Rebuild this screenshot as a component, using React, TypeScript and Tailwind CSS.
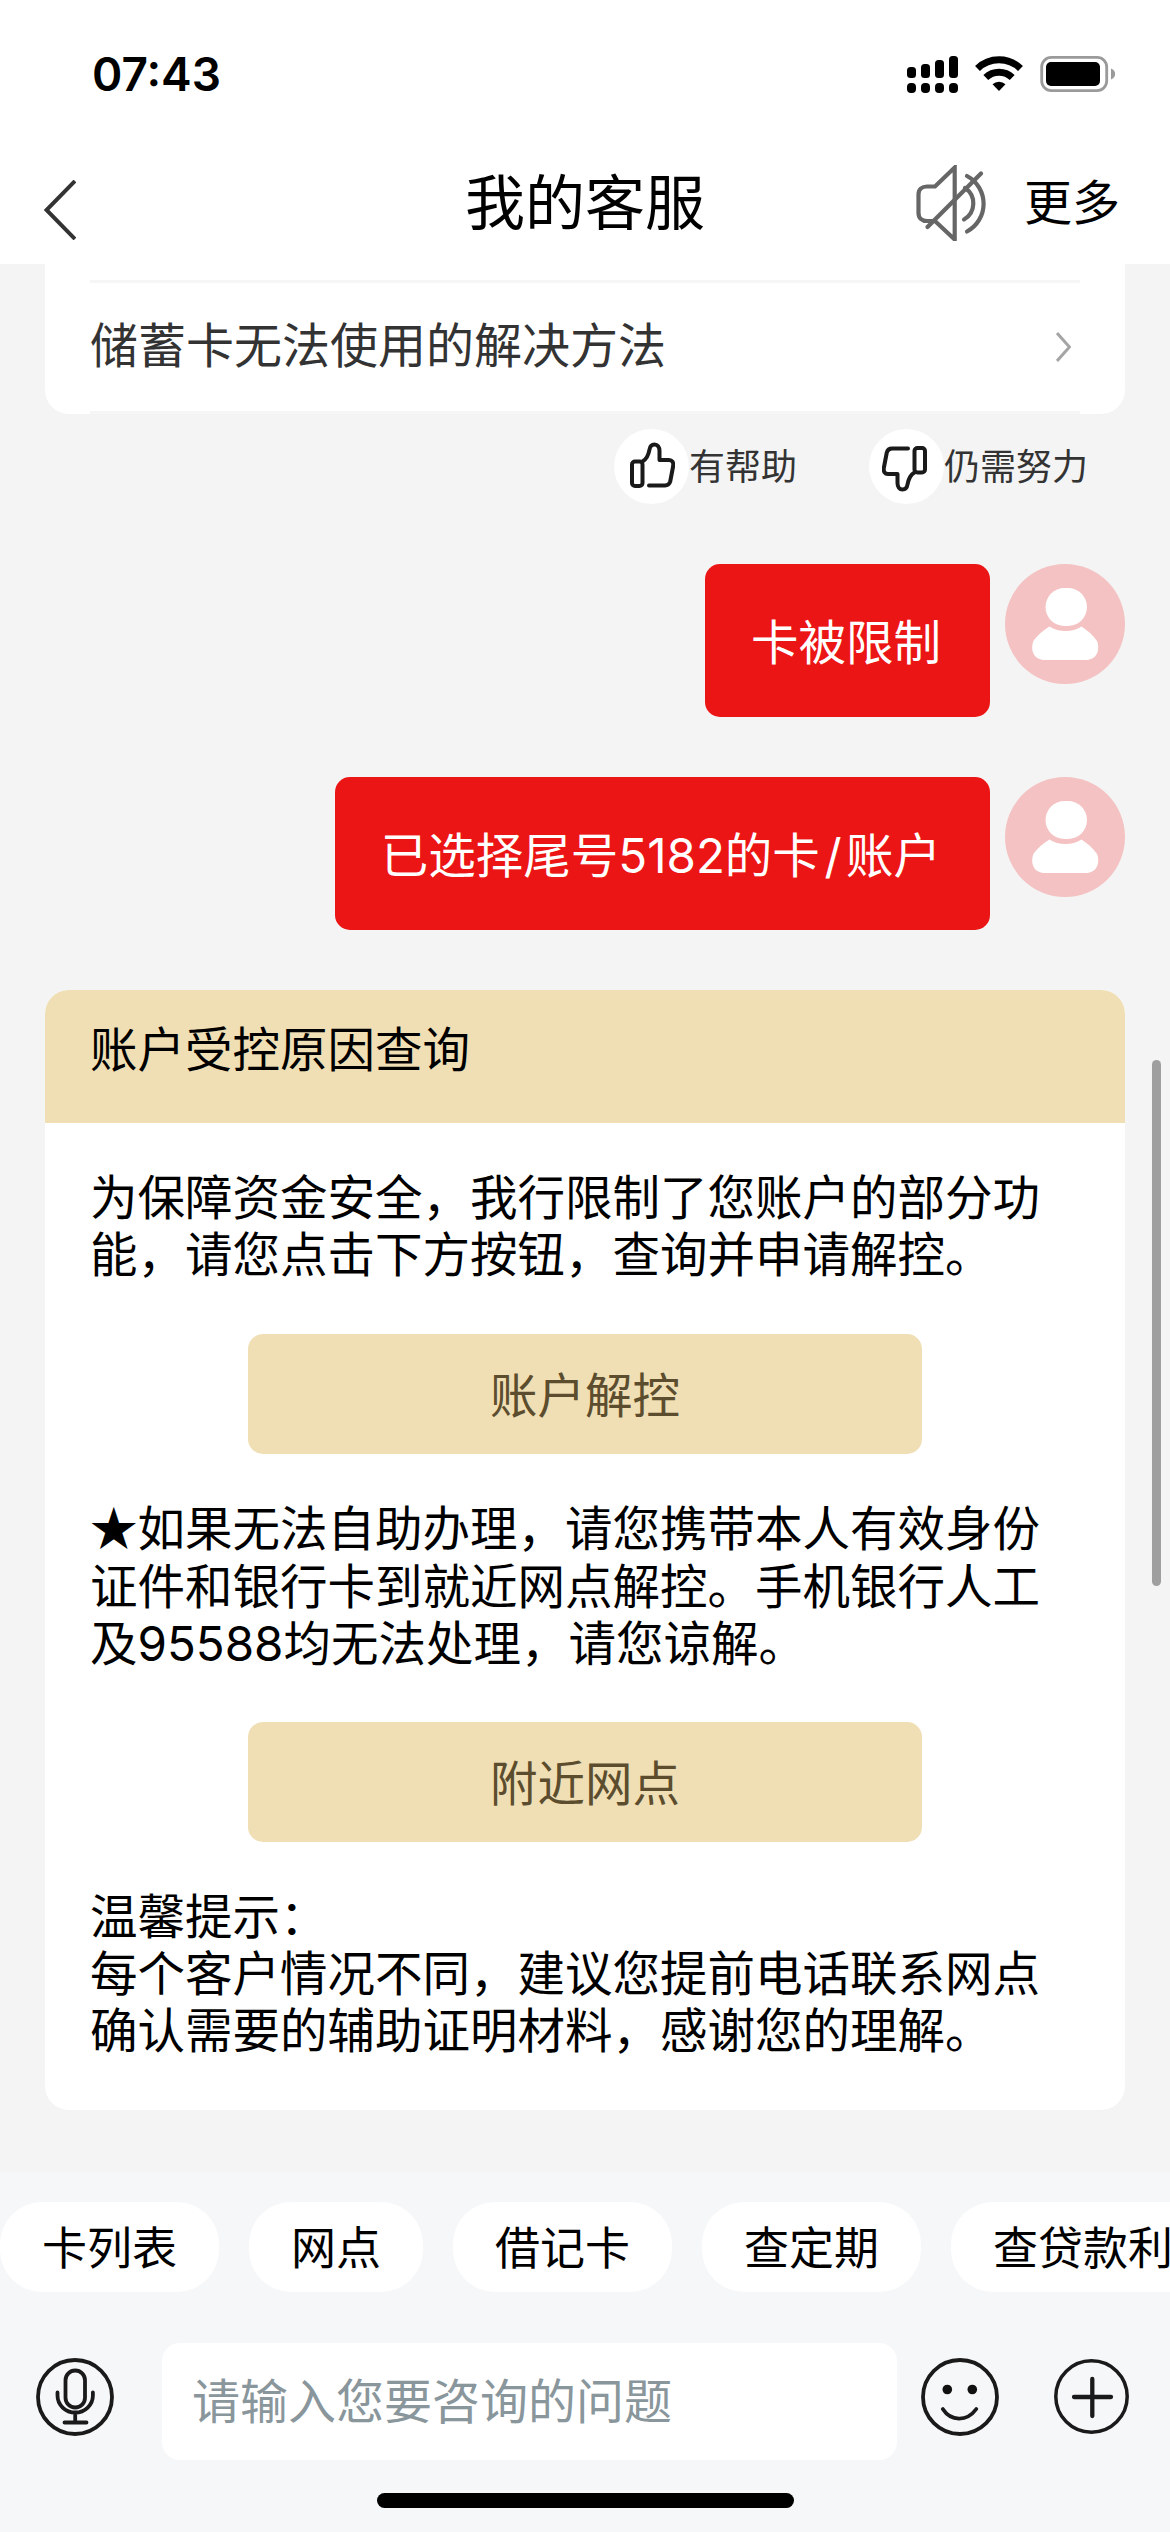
import type { ReactNode } from "react";

const chips = ["卡列表", "网点", "借记卡", "查定期", "查贷款利率"];

function StatusBar() {
  return (
    <div className="flex h-[141px] items-start justify-between pl-[92px] pr-[54px] pt-[46px]">
      <span className="text-[46px] leading-[57px] font-semibold">07:43</span>
      <svg className="mt-[7px]" width="211" height="42" viewBox="0 0 211 42">
        <g>
          <rect x="2" y="14" width="9" height="11" rx="3.500" />
          <rect x="16" y="11" width="9" height="14" rx="3.500" />
          <rect x="30" y="7" width="9" height="18" rx="3.500" />
          <rect x="44" y="3" width="9" height="22" rx="3.500" />
          <rect x="2" y="30" width="9" height="10" rx="4" />
          <rect x="16" y="30" width="9" height="10" rx="4" />
          <rect x="30" y="30" width="9" height="10" rx="4" />
          <rect x="44" y="30" width="9" height="10" rx="4" />
        </g>
        <g fill="none" stroke="#000" strokeWidth="7">
          <path d="M72.500 15.500a31 31 0 0 1 43 0" />
          <path d="M80.800 24.500a19 19 0 0 1 26.400 0" />
        </g>
        <path d="M94 38 87.500 31.300a9.500 9.500 0 0 1 13 0z" />
        <rect x="136.700" y="4.400" width="65" height="33.200" rx="9.500" fill="none" stroke="#9a9a9a" strokeWidth="2.800" />
        <rect x="141" y="9" width="54" height="24" rx="5" />
        <path d="M206 15.500c5.500 2 5.500 9 0 11z" fill="#9a9a9a" />
      </svg>
    </div>
  );
}

function Header() {
  return (
    <div className="grid h-[123px] grid-cols-3 items-center px-[50px]">
      <svg className="mt-[15px] -ml-1.5" width="32" height="60" viewBox="0 0 32 60" fill="none" stroke="#333" strokeWidth="4">
        <path d="M31 1 2.500 30 31 59" />
      </svg>
      <h1 className="mt-px text-center text-[60px] leading-[72px] whitespace-nowrap">我的客服</h1>
      <div className="flex items-center justify-end gap-[35px]">
        <svg width="74" height="76" viewBox="0 0 74 76" fill="none" stroke="#666" strokeWidth="4.200" strokeLinecap="round">
          <path d="M39.700 2.500v72L20 56h-8c-5 0-8.500-3-8.500-8V29.500c0-5 3.500-8 8.500-8h8z" />
          <path d="M12.500 62 66 8.500" />
          <path d="M52 11a31.500 31.500 0 0 1 0 55.500" />
          <path d="M50 23a18.500 18.500 0 0 1-1 31.500" />
        </svg>
        <span className="mt-px text-[48px] leading-[58px]">更多</span>
      </div>
    </div>
  );
}

function ThumbIcon({ className }: { className?: string }) {
  return (
    <svg className={className} width="46" height="46" viewBox="0 0 46 46" fill="none" stroke="#1a1a1a" strokeWidth="4" strokeLinecap="round" strokeLinejoin="round">
      <rect x="3" y="19.500" width="10.500" height="24.500" rx="3" />
      <path d="M20 43.500h16c3 0 4.500-1.500 5.200-4l3-15.500c.5-3.500-1-6-4.200-6H30.500V9c0-4-2-6.500-5-6.500s-4.500 2-5 5C19.500 13 18 17 13.500 19.500" />
    </svg>
  );
}

function Avatar() {
  return (
    <div className="h-[120px] w-[120px] shrink-0 rounded-full bg-[#f4c2c2]">
      <svg width="120" height="120" viewBox="0 0 120 120" fill="#fff">
        <rect x="40.500" y="24" width="41.500" height="38" rx="19" />
        <path d="M44.500 62.500c9 6 23 6 32 0C82 66 88 71 92 77c1 2 1.200 3.500 1.200 7 0 7-5 12-12 12h-42c-7 0-12-5-12-12 0-3.500.5-5.500 1.500-7.500C33 70.500 39 66 44.500 62.500z" />
      </svg>
    </div>
  );
}

function UserMessage({ children }: { children: ReactNode }) {
  return (
    <div className="flex justify-end gap-[15px] pr-[45px]">
      <div className="flex h-[153px] items-center rounded-[15px] bg-[#ec1515] pr-[49px] pl-[46px] pt-1 text-[47.500px] leading-[57px] text-white">
        <p>{children}</p>
      </div>
      <Avatar />
    </div>
  );
}

function GoldButton({ children }: { children: ReactNode }) {
  return (
    <button className="mx-auto flex h-[120px] w-[674px] items-center justify-center rounded-[15px] bg-[#f0dfb4] pt-[2px] text-[47.500px] leading-[57px] text-[#5c4d2e]">
      {children}
    </button>
  );
}

export default function App() {
  return (
    <div className="relative flex h-[2532px] w-[1170px] flex-col overflow-hidden bg-[#f4f4f4] font-[Inter,'Noto_Sans_CJK_SC',sans-serif] text-black">
      <div className="bg-white">
        <StatusBar />
        <Header />
      </div>

      <div className="mx-[45px] h-[150px] rounded-b-[24px] bg-white px-[45px] pt-4">
        <div className="flex h-[134px] items-center justify-between border-y-[3px] border-[#f6f6f6] pr-[9px] text-[48px] leading-[58px] text-[#333]">
          <span className="mb-[2px]">储蓄卡无法使用的解决方法</span>
          <svg width="15" height="30" viewBox="0 0 15 30" fill="none" stroke="#a5a5a5" strokeWidth="3">
            <path d="M1 1 13.500 15 1 29" />
          </svg>
        </div>
      </div>

      <div className="mt-[15px] flex h-[75px] items-center justify-end pr-[82px] text-[36px] leading-[44px] text-[#333]">
        <div className="flex items-center">
          <div className="flex h-[75px] w-[75px] items-center justify-center rounded-full bg-white">
            <ThumbIcon className="mb-[4px] ml-px" />
          </div>
          <span>有帮助</span>
        </div>
        <div className="ml-[72px] flex items-center">
          <div className="flex h-[75px] w-[75px] items-center justify-center rounded-full bg-white">
            <ThumbIcon className="mt-[5px] ml-[-3px] rotate-180" />
          </div>
          <span>仍需努力</span>
        </div>
      </div>

      <div className="mt-[60px] flex flex-col gap-[60px]">
        <UserMessage>卡被限制</UserMessage>
        <UserMessage>
          已选择尾号5182的卡<span className="mx-[4.500px]">/</span>账户
        </UserMessage>
      </div>

      <div className="mx-[45px] mt-[60px] h-[1120px] overflow-hidden rounded-[24px] bg-white text-[47.500px] leading-[57.200px]">
        <div className="h-[133px] bg-[#f0dfb4] px-[45px] pt-[31px]">账户受控原因查询</div>
        <div className="px-[45px] pt-[46px]">
          <p className="mb-[51px] whitespace-nowrap">
            为保障资金安全，我行限制了您账户的部分功
            <br />
            能，请您点击下方按钮，查询并申请解控。
          </p>
          <GoldButton>账户解控</GoldButton>
          <p className="mt-[46px] mb-[50px] whitespace-nowrap">
            <span className="font-['Noto_Sans_CJK_SC'] leading-none">★</span>如果无法自助办理，请您携带本人有效身份
            <br />
            证件和银行卡到就近网点解控。手机银行人工
            <br />
            及95588均无法处理，请您谅解。
          </p>
          <GoldButton>附近网点</GoldButton>
          <p className="mt-[46px] whitespace-nowrap">
            温馨提示：
            <br />
            每个客户情况不同，建议您提前电话联系网点
            <br />
            确认需要的辅助证明材料，感谢您的理解。
          </p>
        </div>
      </div>

      <div className="mt-[62px] flex-1 bg-[#f5f7f9] pt-[30px]">
        <div className="flex gap-[30px] overflow-hidden">
          {chips.map((chip) => (
            <div key={chip} className="flex h-[90px] shrink-0 items-center rounded-[42px] bg-white px-[42px] pt-[3px] text-[45px] leading-[54px]">
              {chip}
            </div>
          ))}
        </div>

        <div className="mt-[51px] flex h-[117px] items-center pl-9 pr-[41px]">
          <svg className="mb-[9px] shrink-0" width="78" height="78" viewBox="0 0 78 78" fill="none" stroke="#1a1a1a" strokeWidth="3.800" strokeLinecap="round">
            <circle cx="39" cy="39" r="37" />
            <rect x="29.500" y="12.500" width="19.500" height="37" rx="9.700" />
            <path d="M21.500 34.500v3a17.700 17 0 0 0 35.400 0v-3M39.200 55v9M28.500 64.500h22" />
          </svg>
          <div className="ml-12 mr-6 flex h-[117px] w-[735px] shrink-0 items-center rounded-[18px] bg-white pl-[30px] text-[48px] leading-[58px] text-[#89969c]">
            请输入您要咨询的问题
          </div>
          <svg className="mb-[9px] shrink-0" width="78" height="78" viewBox="0 0 78 78" fill="none" stroke="#1a1a1a" strokeWidth="3.800" strokeLinecap="round">
            <circle cx="39" cy="39" r="37" />
            <circle cx="26.300" cy="31.500" r="4.800" fill="#111" stroke="none" />
            <circle cx="51.300" cy="31.500" r="4.800" fill="#111" stroke="none" />
            <path d="M21.800 51c8 12.500 24 13 33.500 0" />
          </svg>
          <svg className="mb-[10px] ml-[55px] shrink-0" width="75" height="75" viewBox="0 0 75 75" fill="none" stroke="#1a1a1a" strokeLinecap="round">
            <circle cx="37.500" cy="37.500" r="35.700" strokeWidth="3.500" />
            <path d="M20 38h37M38.300 20v37" strokeWidth="4.300" />
          </svg>
        </div>

        <div className="mx-auto mt-[33px] h-[15px] w-[417px] rounded-full bg-black" />
      </div>

      {/* scroll indicator over the chat */}
      <div className="absolute top-[1060px] right-[9px] h-[526px] w-[9px] rounded-full bg-[#9f9f9f]" />
    </div>
  );
}
